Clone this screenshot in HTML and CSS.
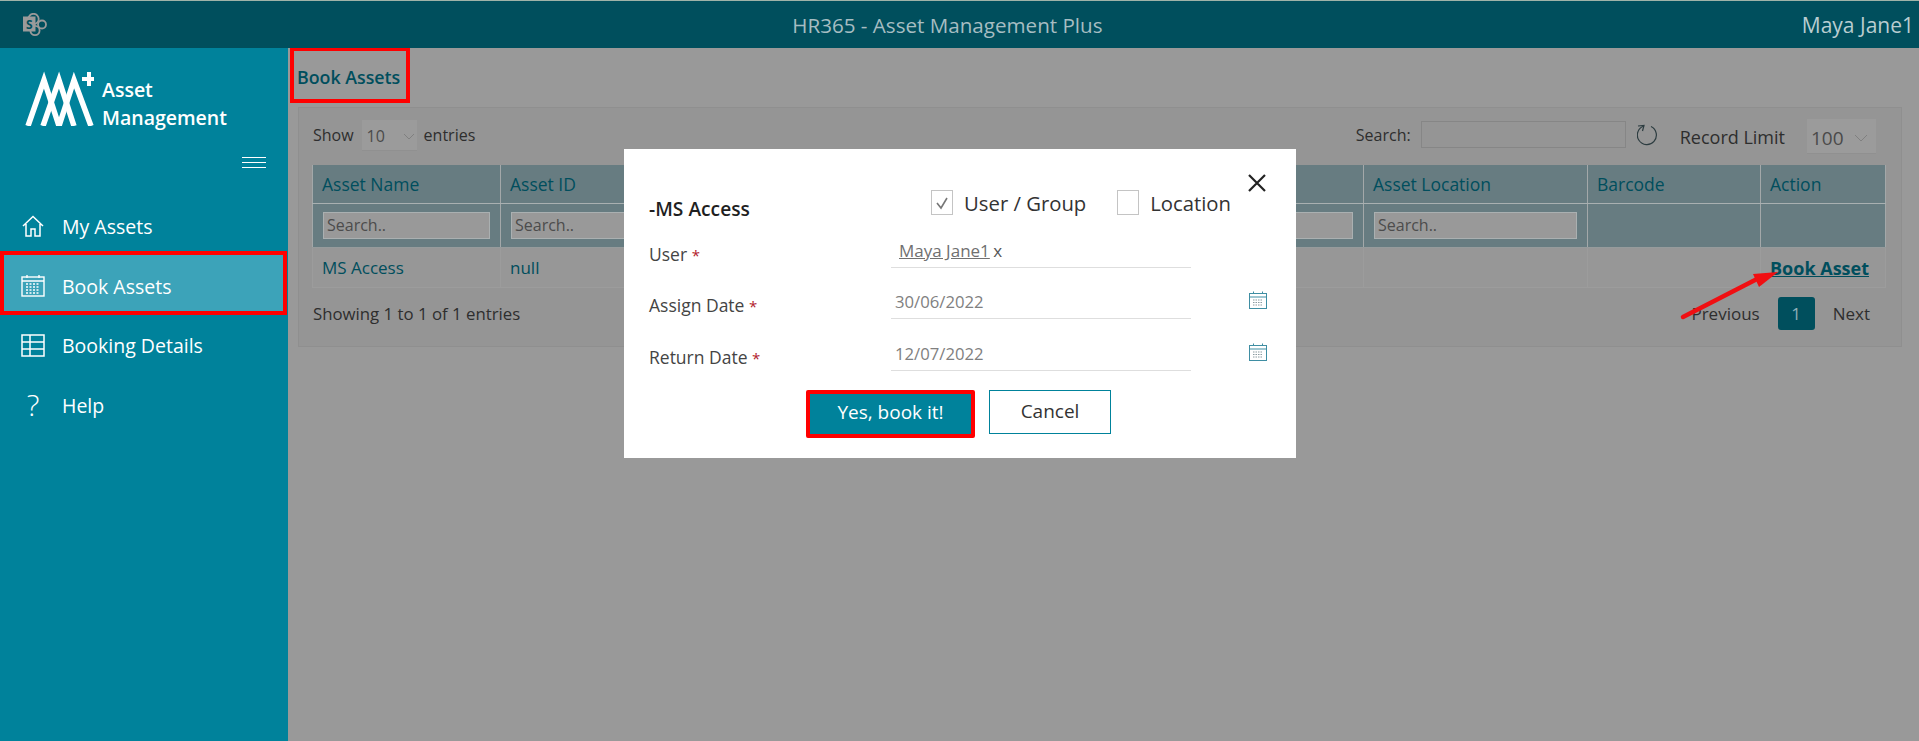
FILE: index.html
```html
<!DOCTYPE html>
<html lang="en">
  <head>
    <meta charset="UTF-8" />
    <title>HR365 - Asset Management Plus</title>
    <link rel="stylesheet" href="styles.css">
  </head>
  <body>
    <header class="topbar">
      <svg class="sp-logo" width="24" height="24" viewBox="0 0 24 24">
        <circle cx="10.5" cy="6" r="5.2" fill="none" stroke="#9a9a9a" stroke-width="1.8" />
        <circle cx="19" cy="11.5" r="4" fill="none" stroke="#9a9a9a" stroke-width="1.8" />
        <circle cx="12" cy="17.5" r="4.6" fill="none" stroke="#9a9a9a" stroke-width="1.8" />
        <rect x="0" y="3.5" width="12.5" height="15" fill="#9a9a9a" />
        <text x="6.2" y="16" text-anchor="middle" class="sp-s">S</text>
      </svg>
      <div class="topbar-title">HR365 - Asset Management Plus</div>
      <div class="topbar-user">Maya Jane1</div>
    </header>

    <div class="app">
      <aside class="sidebar">
        <div class="logo">
          <svg width="74" height="56" viewBox="0 0 74 56">
            <g fill="none" stroke="#fff" stroke-width="5.5">
              <path d="M3 56 L19 10 L34 56" />
              <path d="M18 56 L34 10 L49 56" />
              <path d="M34 56 L49 10 L66 56" />
            </g>
            <path d="M62 7 h5 v-5 h4 v5 h3 v4 h-3 v5 h-4 v-5 h-5 z" fill="#fff" transform="translate(-5 0)" />
          </svg>
          <div class="logo-text">Asset<br />Management</div>
        </div>
        <div class="burger"><span></span><span></span><span></span></div>
        <nav class="nav">
          <a class="nav-item">
            <svg width="24" height="24" viewBox="0 0 24 24" fill="none" stroke="#fff" stroke-width="1.5">
              <path d="M2 12 L12 2.5 L22 12 M5 10 V22 H10 V15 H14 V22 H19 V10" />
            </svg>
            My Assets
          </a>
          <a class="nav-item active">
            <svg width="24" height="24" viewBox="0 0 24 24" fill="none" stroke="#fff" stroke-width="1.4">
              <rect x="1" y="3" width="22" height="19" />
              <path d="M1 7 H23 M6 1 V4 M18 1 V4" />
              <path d="M5 10 H19 M5 13 H19 M5 16 H19 M5 19 H19" stroke-dasharray="2 1.5" stroke-width="1.6" />
            </svg>
            Book Assets
          </a>
          <a class="nav-item">
            <svg width="24" height="24" viewBox="0 0 24 24" fill="none" stroke="#fff" stroke-width="1.5">
              <rect x="1" y="2" width="22" height="21" />
              <path d="M1 9 H23 M1 16 H23 M9 2 V23" />
            </svg>
            Booking Details
          </a>
          <a class="nav-item">
            <span class="help-mark">?</span>
            Help
          </a>
        </nav>
      </aside>

      <main class="main">
        <h2 class="page-title">Book Assets</h2>
        <section class="panel">
          <div class="toolbar">
            <span>Show</span>
            <div class="pick pick-small">
              <span>10</span>
              <svg width="12" height="7" viewBox="0 0 12 7"><path d="M1 1 L6 6 L11 1" fill="none" stroke="#808080" /></svg>
            </div>
            <span>entries</span>
            <div class="toolbar-right">
              <span>Search:</span>
              <input class="search-box" type="text" />
              <svg class="refresh" width="20" height="22" viewBox="0 0 20 22" fill="none" stroke="#2c3c40" stroke-width="1.2">
                <path d="M7 2 A9.5 9.5 0 1 0 14 2.5" />
                <path d="M1 2 L7 1.5 L5.5 7" />
              </svg>
              <span class="limit-label">Record Limit</span>
              <div class="pick pick-large">
                <span>100</span>
                <svg width="14" height="8" viewBox="0 0 14 8"><path d="M1 1 L7 7 L13 1" fill="none" stroke="#808080" /></svg>
              </div>
            </div>
          </div>

          <table class="grid">
            <colgroup>
              <col class="c-name" /><col class="c-id" /><col class="c-type" /><col class="c-qty" />
              <col class="c-loc" /><col class="c-bar" /><col class="c-act" />
            </colgroup>
            <thead>
              <tr class="head-row">
                <th>Asset Name</th><th>Asset ID</th><th></th><th></th>
                <th>Asset Location</th><th>Barcode</th><th>Action</th>
              </tr>
              <tr class="filter-row">
                <th><input type="text" placeholder="Search.." /></th>
                <th><input type="text" placeholder="Search.." /></th>
                <th><input type="text" /></th>
                <th><input type="text" /></th>
                <th><input type="text" placeholder="Search.." /></th>
                <th></th>
                <th></th>
              </tr>
            </thead>
            <tbody>
              <tr>
                <td>MS Access</td><td>null</td><td></td><td></td><td></td><td></td>
                <td><a class="book-link">Book Asset</a></td>
              </tr>
            </tbody>
          </table>

          <div class="table-foot">
            <span>Showing 1 to 1 of 1 entries</span>
            <div class="pager">
              <span>Previous</span>
              <span class="page-num">1</span>
              <span>Next</span>
            </div>
          </div>
        </section>
      </main>
    </div>

    <!-- red arrow from the annotated screenshot -->
    <svg class="arrow" width="110" height="60" viewBox="0 0 110 60">
      <path d="M8 52 L82 14" stroke="#f00f12" stroke-width="4.5" stroke-linecap="round" />
      <path d="M103 7 L78 9 L84 22 Z" fill="#f00f12" />
    </svg>

    <div class="modal">
      <svg class="modal-close" width="18" height="18" viewBox="0 0 18 18">
        <path d="M1 1 L17 17 M17 1 L1 17" stroke="#222" stroke-width="2.2" />
      </svg>
      <div class="modal-head">
        <div class="modal-title">-MS Access</div>
        <div class="radio-opts">
          <span class="check-box">
            <svg width="14" height="14" viewBox="0 0 14 14"><path d="M2 7 L6 12 L12 2" fill="none" stroke="#777" stroke-width="1.6" /></svg>
          </span>
          <span class="check-label">User / Group</span>
          <span class="check-box second"></span>
          <span class="check-label">Location</span>
        </div>
      </div>

      <div class="form-row">
        <label>User <em>*</em></label>
        <div class="field"><a class="user-tag">Maya Jane1</a> <span class="user-x">x</span></div>
      </div>
      <div class="form-row row-tight">
        <label>Assign Date <em>*</em></label>
        <div class="field date-value">30/06/2022</div>
        <svg class="cal" width="18" height="18" viewBox="0 0 18 18" fill="none" stroke="#3f8ea3">
          <rect x="0.5" y="2.5" width="17" height="15" />
          <path d="M0.5 6 H17.5 M4.5 0.5 V3 M13.5 0.5 V3" />
          <path d="M4 9 H14 M4 11.5 H14 M4 14 H14" stroke="#8a9aa0" stroke-dasharray="1.5 1" />
        </svg>
      </div>
      <div class="form-row">
        <label>Return Date <em>*</em></label>
        <div class="field date-value">12/07/2022</div>
        <svg class="cal" width="18" height="18" viewBox="0 0 18 18" fill="none" stroke="#3f8ea3">
          <rect x="0.5" y="2.5" width="17" height="15" />
          <path d="M0.5 6 H17.5 M4.5 0.5 V3 M13.5 0.5 V3" />
          <path d="M4 9 H14 M4 11.5 H14 M4 14 H14" stroke="#8a9aa0" stroke-dasharray="1.5 1" />
        </svg>
      </div>

      <div class="modal-actions">
        <button type="button" class="btn-yes">Yes, book it!</button>
        <button type="button" class="btn-cancel">Cancel</button>
      </div>
    </div>
  </body>
</html>
```

FILE: styles.css
```css
* {
  box-sizing: border-box;
}
html,
body {
  margin: 0;
  height: 741px;
  overflow: hidden;
}
body {
  font-family: "Open Sans", "Noto Sans", sans-serif;
  font-size: 16px;
  color: #2e2e2e;
  background-color: #999;
}

/* top bar */
.topbar {
  height: 48px;
  background-color: #004f5d;
  border-top: 1px solid #9fb3a8;
  display: flex;
  align-items: center;
  padding: 0 5px 0 23px;
}
.sp-logo {
  flex: none;
}
.sp-s {
  font-size: 12px;
  font-weight: 700;
  fill: #004f5d;
}
.topbar-title {
  flex: 1;
  text-align: center;
  font-size: 20.6px;
  color: #a6bdc2;
  padding-left: 46px;
}
.topbar-user {
  font-size: 21px;
  color: #b9cdd1;
}

.app {
  display: flex;
  height: 693px;
}

/* sidebar */
.sidebar {
  width: 288px;
  flex: none;
  background-color: #00829b;
  color: #fff;
}
.logo {
  height: 87px;
  display: flex;
  align-items: flex-start;
  padding: 22px 0 0 25px;
}
.logo svg {
  flex: none;
}
.logo-text {
  margin: 6px 0 0 3px;
  font-size: 19.5px;
  font-weight: 600;
  line-height: 28px;
}
.burger {
  margin: 22px 22px 0 auto;
  width: 24px;
  height: 11px;
  display: flex;
  flex-direction: column;
  justify-content: space-between;
}
.burger span {
  display: block;
  height: 1px;
  background-color: #fff;
}
.nav {
  margin-top: 28px;
}
.nav-item {
  height: 60px;
  display: flex;
  align-items: center;
  gap: 17px;
  padding-left: 21px;
  font-size: 19.5px;
  color: #fff;
}
.nav-item svg {
  flex: none;
}
.nav-item.active {
  height: 64px;
  margin: -5px 1px 0 0;
  padding: 6px 0 0 17px;
  background-color: #3ca3b9;
  border: 4px solid #f00;
}
.help-mark {
  width: 24px;
  text-align: center;
  font-size: 30px;
  font-weight: 300;
  line-height: 1;
}

/* main part, already dimmed by the modal */
.main {
  flex: 1;
  padding-left: 2px;
}
.page-title {
  margin: 0;
  width: 120px;
  height: 55px;
  padding: 4px 0 0 3px;
  border: 4px solid #f00;
  border-top-width: 3px;
  display: flex;
  align-items: center;
  font-size: 17.8px;
  font-weight: 600;
  color: #004e5d;
  white-space: nowrap;
}
.panel {
  margin: 4px 18px 0 8px;
  height: 240px;
  padding: 0 15px 0 13px;
  background-color: #959595;
  border: 1px solid #8f8f8f;
}
.toolbar {
  height: 57px;
  display: flex;
  align-items: center;
  padding: 0 0 4px 1px;
  font-size: 16px;
}
.pick {
  display: flex;
  align-items: center;
  justify-content: space-between;
  background-color: #9b9b9b;
  border-bottom: 1px solid #909090;
  color: #4a4a4a;
}
.pick-small {
  width: 55px;
  height: 31px;
  margin: 2px 7px 0 8px;
  padding: 2px 2px 0 5px;
}
.pick-large {
  width: 69px;
  height: 35px;
  margin: 4px 0 0 22px;
  padding: 4px 8px 0 4px;
  font-size: 19px;
}
.toolbar-right {
  margin-left: auto;
  padding-right: 10px;
  display: flex;
  align-items: center;
}
.search-box {
  width: 205px;
  height: 27px;
  margin-left: 10px;
  background-color: #959595;
  border: 1px solid #868686;
}
.refresh {
  margin: 0 23px 0 11px;
}
.limit-label {
  padding-top: 4px;
  font-size: 18px;
}

/* table */
.grid {
  width: 1573px;
  table-layout: fixed;
  border-collapse: collapse;
  color: #004e5d;
}
.c-name {
  width: 188px;
}
.c-id {
  width: 250px;
}
.c-type {
  width: 350px;
}
.c-qty {
  width: 263px;
}
.c-loc {
  width: 224px;
}
.c-bar {
  width: 173px;
}
.c-act {
  width: 125px;
}
.grid th,
.grid td {
  padding: 0 9px;
  text-align: left;
  font-weight: 400;
  border: 1px solid #a3a8a9;
}
.head-row th {
  height: 38px;
  background-color: #677c81;
  border-top: none;
  border-bottom-color: #a9b0b1;
  font-size: 17.5px;
}
.filter-row th {
  height: 44px;
  padding: 0 10px;
  background-color: #677c81;
  border-bottom-color: #969b9c;
}
.filter-row input {
  display: block;
  width: 100%;
  height: 27px;
  padding: 0 3px;
  font: inherit;
  font-size: 16px;
  background-color: #999;
  border: 1px solid #aab0b1;
}
.filter-row input::placeholder {
  color: #4c4c4c;
  opacity: 1;
}
.grid td {
  height: 40px;
  padding-top: 1px;
  background-color: #979797;
  border-color: #9c9c9c;
  font-size: 17px;
}
.book-link {
  font-size: 18px;
  font-weight: 700;
  color: #004e5d;
  text-decoration: underline;
  white-space: nowrap;
}
.table-foot {
  display: flex;
  justify-content: space-between;
  align-items: flex-start;
  padding: 9px 16px 0 1px;
}
.table-foot > span {
  padding-top: 5px;
  font-size: 16.8px;
}
.pager {
  display: flex;
  align-items: center;
  font-size: 17px;
}
.page-num {
  width: 37px;
  height: 33px;
  margin: 0 18px;
  background-color: #004f5d;
  color: #8fb0b8;
  border-radius: 3px;
  display: flex;
  align-items: center;
  justify-content: center;
}

/* arrow and modal lie on top of everything */
.arrow {
  position: absolute;
  left: 1675px;
  top: 265px;
}
.modal {
  position: absolute;
  left: 624px;
  top: 149px;
  width: 672px;
  height: 309px;
  padding: 41px 0 0 25px;
  background-color: #fff;
  color: #333;
}
.modal-close {
  position: absolute;
  right: 30px;
  top: 25px;
}
.modal-head {
  height: 37px;
  display: flex;
  justify-content: space-between;
}
.modal-title {
  margin-top: 5px;
  font-size: 19.2px;
  font-weight: 600;
  color: #1f1f1f;
}
.radio-opts {
  margin-right: 65px;
  height: 25px;
  display: flex;
  align-items: center;
  font-size: 20.3px;
}
.check-box {
  width: 22px;
  height: 25px;
  margin-right: 11px;
  border: 1px solid #c4c4c4;
  display: flex;
  align-items: center;
  justify-content: center;
}
.check-box.second {
  margin-left: 31px;
}
.form-row {
  height: 41px;
  margin-bottom: 10px;
  display: flex;
  align-items: flex-end;
}
.row-tight {
  margin-bottom: 11px;
}
.form-row label {
  width: 242px;
  padding-bottom: 2px;
  font-size: 17.5px;
  color: #444;
}
.form-row em {
  font-style: normal;
  font-size: 15px;
  color: #b1202c;
}
.field {
  width: 300px;
  height: 41px;
  padding: 12px 0 0 8px;
  border-bottom: 1px solid #dedede;
  font-size: 17px;
  color: #666;
}
.user-tag {
  color: #707070;
  text-decoration: underline;
}
.user-x {
  margin-left: -1px;
  color: #555;
}
.date-value {
  padding-left: 4px;
  font-size: 16.7px;
  color: #808080;
}
.cal {
  margin: 0 0 10px 58px;
}
.modal-actions {
  margin: 19px 0 0 157px;
  display: flex;
  align-items: flex-start;
  gap: 14px;
}
.modal-actions button {
  font: inherit;
  font-size: 19px;
  cursor: pointer;
}
.btn-yes {
  width: 169px;
  height: 48px;
  padding: 0 0 4px;
  background-color: #00829b;
  color: #fff;
  border: 4px solid #f00;
  border-radius: 2px;
}
.btn-cancel {
  width: 122px;
  height: 44px;
  padding: 0 0 2px;
  background-color: #fff;
  color: #333;
  border: 1px solid #00829b;
}
```
